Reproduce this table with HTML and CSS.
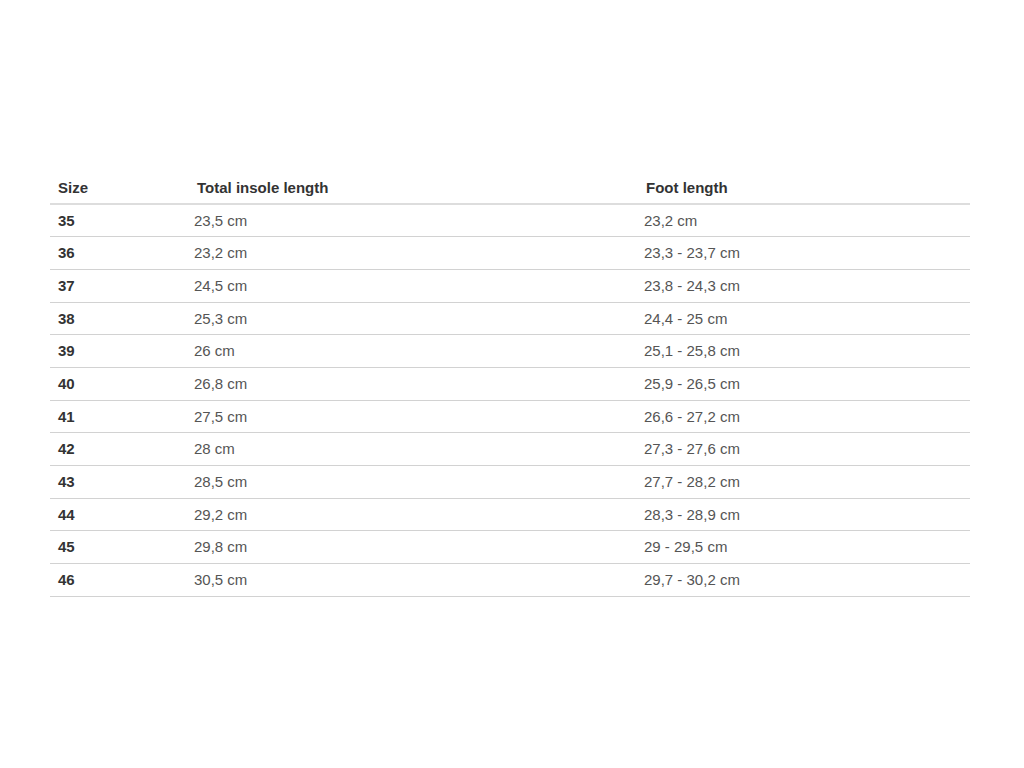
FILE: index.html
```html
<!DOCTYPE html>
<html lang="en">
<head>
<meta charset="utf-8">
<title>Size chart</title>
<link rel="stylesheet" href="styles.css">
</head>
<body>
<div class="page">
  <table class="sizes">
    <colgroup>
      <col class="c1"><col class="c2"><col class="c3">
    </colgroup>
    <thead>
      <tr><th>Size</th><th class="off">Total insole length</th><th class="off2">Foot length</th></tr>
    </thead>
    <tbody>
      <tr><td class="sz">35</td><td>23,5 cm</td><td>23,2 cm</td></tr>
      <tr><td class="sz">36</td><td>23,2 cm</td><td>23,3 - 23,7 cm</td></tr>
      <tr><td class="sz">37</td><td>24,5 cm</td><td>23,8 - 24,3 cm</td></tr>
      <tr><td class="sz">38</td><td>25,3 cm</td><td>24,4 - 25 cm</td></tr>
      <tr><td class="sz">39</td><td>26 cm</td><td>25,1 - 25,8 cm</td></tr>
      <tr><td class="sz">40</td><td>26,8 cm</td><td>25,9 - 26,5 cm</td></tr>
      <tr><td class="sz">41</td><td>27,5 cm</td><td>26,6 - 27,2 cm</td></tr>
      <tr><td class="sz">42</td><td>28 cm</td><td>27,3 - 27,6 cm</td></tr>
      <tr><td class="sz">43</td><td>28,5 cm</td><td>27,7 - 28,2 cm</td></tr>
      <tr><td class="sz">44</td><td>29,2 cm</td><td>28,3 - 28,9 cm</td></tr>
      <tr><td class="sz">45</td><td>29,8 cm</td><td>29 - 29,5 cm</td></tr>
      <tr><td class="sz">46</td><td>30,5 cm</td><td>29,7 - 30,2 cm</td></tr>
    </tbody>
  </table>
</div>
</body>
</html>
```
FILE: styles.css
```css
html, body {
  margin: 0;
  padding: 0;
  background: #fff;
}
.page {
  padding: 172px 54px 0 50px;
  font-family: "Liberation Sans", Arial, sans-serif;
  font-size: 15px;
}
.sizes {
  width: 920px;
  border-collapse: collapse;
  table-layout: fixed;
}
.c1 { width: 136px; }
.c2 { width: 450px; }
.c3 { width: auto; }
.sizes th,
.sizes td {
  text-align: left;
  padding: 8px 8px;
  line-height: 15.67px;
  vertical-align: middle;
}
.sizes th {
  font-weight: bold;
  color: #333;
  border-bottom: 2px solid #ddd;
  padding-bottom: 7px;
}
.sizes th.off {
  padding-left: 11px;
}
.sizes th.off2 {
  padding-left: 10px;
}
.sizes td {
  color: #555;
  border-bottom: 1px solid #d2d2d2;
}
.sizes td.sz {
  font-weight: bold;
  color: #333;
}
```
